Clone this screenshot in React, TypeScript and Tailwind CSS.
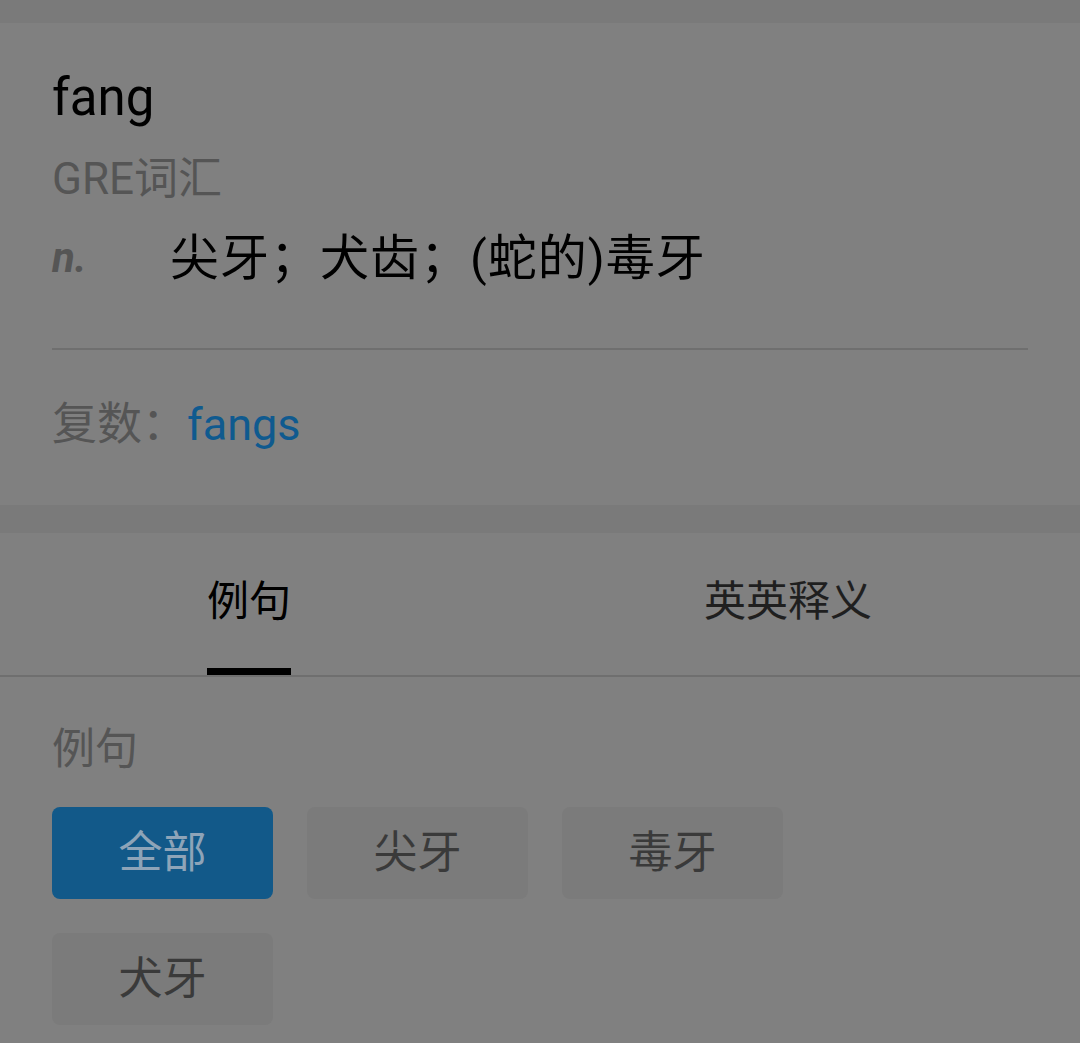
const font = { fontFamily: 'Roboto, "Noto Sans CJK SC", sans-serif' }

const chips = [
  { label: '全部', active: true },
  { label: '尖牙', active: false },
  { label: '毒牙', active: false },
  { label: '犬牙', active: false },
]

export default function App() {
  return (
    <div className="min-h-[1043px] w-[1080px] bg-[#808080]" style={font}>
      <div className="h-[23px] bg-[#7a7a7a]" />

      <section className="px-[52px] pt-[42px] pb-0 h-[482px] bg-[#808080]">
        <div className="h-[64px] flex items-center text-[51px] text-black leading-none">fang</div>
        <div className="mt-[22px] h-[56px] flex items-center text-[44px] text-[#555555] leading-none">
          GRE词汇
        </div>
        <div className="mt-[21px] h-[60px] flex items-center leading-none">
          <span className="w-[118px] text-[42px] font-bold italic text-[#555555]">n.</span>
          <span className="text-[49px] tracking-[1px] text-black">尖牙；犬齿；(蛇的)毒牙</span>
        </div>
        <div className="mt-[60px] h-[2px] bg-[#6f6f6f]" />
        <div className="mt-[44px] h-[60px] flex items-center text-[45px] leading-none">
          <span className="text-[#555555]">复数：</span>
          <span className="text-[#0f5a8f]">fangs</span>
        </div>
      </section>

      <div className="h-[28px] bg-[#7a7a7a]" />

      <div className="grid grid-cols-[498px_580px] h-[144px] border-b-2 border-[#6f6f6f]">
        <div className="flex flex-col items-center">
          <div className="h-[135px] pt-[3px] flex items-center text-[42px] text-black leading-none">例句</div>
          <div className="h-[7px] w-[84px] bg-black" />
        </div>
        <div className="flex flex-col items-center">
          <div className="h-[135px] pt-[3px] flex items-center text-[42px] text-[#1f1f1f] leading-none">英英释义</div>
        </div>
      </div>

      <div className="px-[52px]">
        <div className="mt-[45px] h-[54px] flex items-center text-[43px] text-[#555555] leading-none">例句</div>
        <div className="mt-[31px] flex flex-wrap gap-x-[34px] gap-y-[34px] w-[800px]">
          {chips.map((c) => (
            <div
              key={c.label}
              className={
                c.active
                  ? 'w-[221px] h-[92px] rounded-[8px] bg-[#125989] flex items-center justify-center text-[44px] text-[#8ea4b8] leading-none'
                  : 'w-[221px] h-[92px] rounded-[8px] bg-[#7b7b7b] flex items-center justify-center text-[44px] text-[#3a3a3a] leading-none'
              }
            >
              {c.label}
            </div>
          ))}
        </div>
      </div>
    </div>
  )
}
